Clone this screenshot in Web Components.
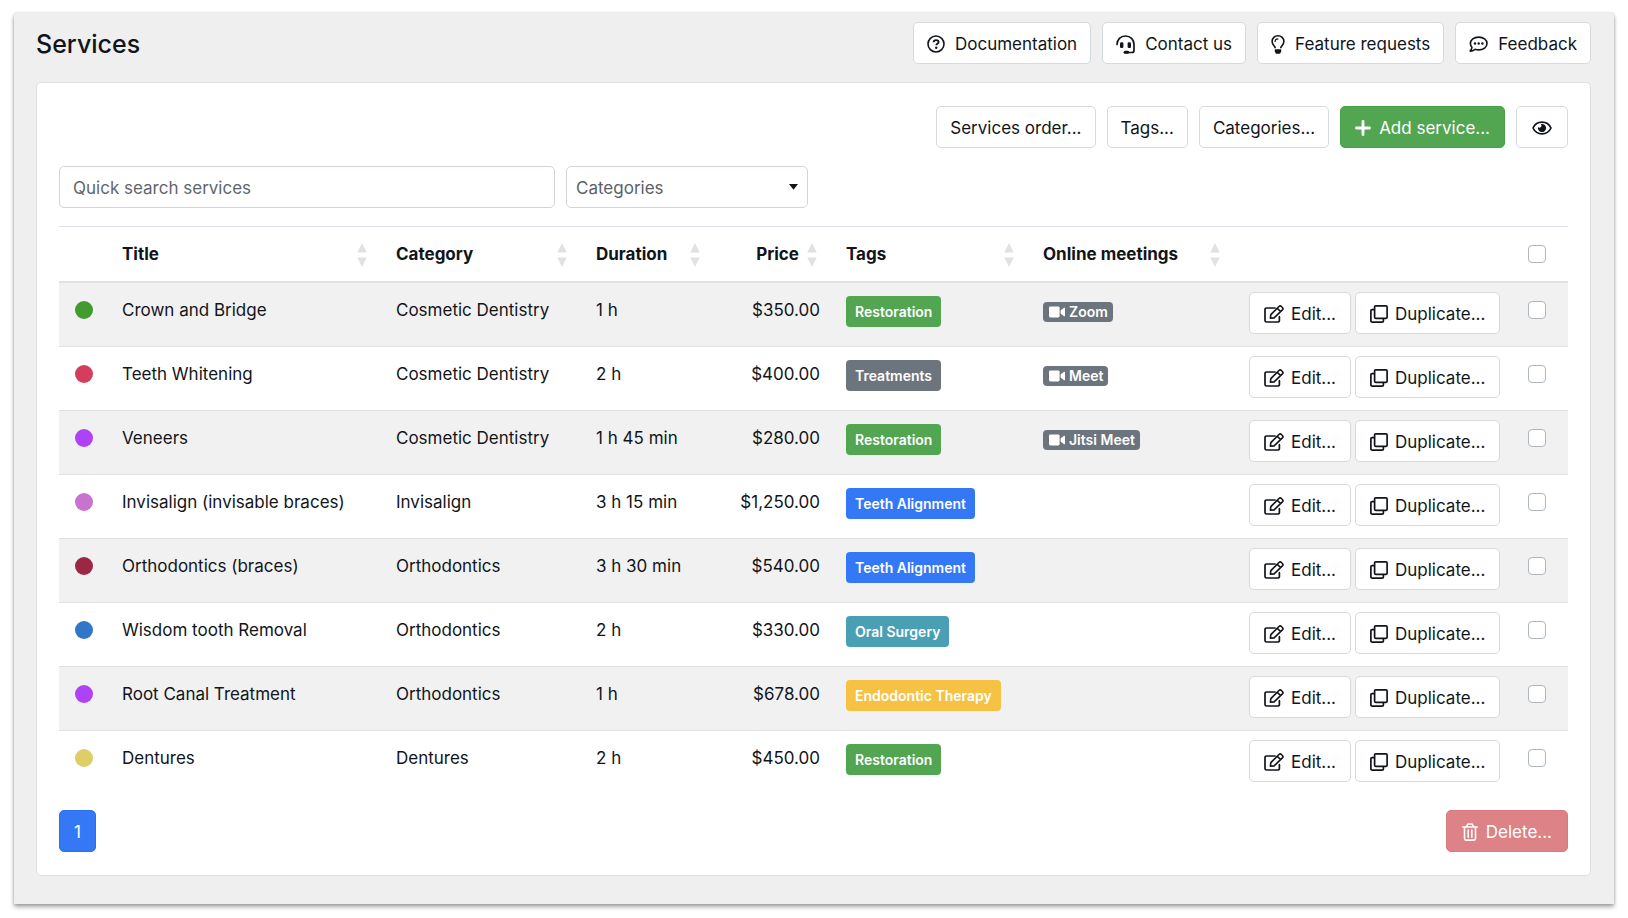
<!DOCTYPE html>
<html lang="en">
<head>
<meta charset="utf-8">
<title>Services</title>
<style>
  body { margin: 0; background: #fff; color: #11151a; font: 17px/27px Inter, "Liberation Sans", sans-serif; }
</style>
</head>
<body>
<services-page></services-page>

<script>
const ICONS = {
  help: [18, 18, '<circle cx="9" cy="9" r="8" fill="none" stroke="currentColor" stroke-width="1.6"/><path d="M6.6 7.200C6.700 5.800 7.800 5.100 9.100 5.100c1.400 0 2.500.8 2.500 2 0 1.600-2.300 1.700-2.300 3.100" fill="none" stroke="currentColor" stroke-width="1.900"/><circle cx="9.200" cy="12.700" r="1.200"/>'],
  headset: [19, 19, '<path d="M1 9.500C1 4.500 4.600 1 9.500 1S18 4.500 18 9.500V15.500a2 2 0 0 1-2 2H9.500" fill="none" stroke="currentColor" stroke-width="1.700" stroke-linecap="round"/><rect x="4" y="7.200" width="3.400" height="5.800" rx="1.300"/><rect x="11.600" y="7.200" width="3.400" height="5.800" rx="1.300"/><rect x="7.600" y="15.800" width="5.600" height="3" rx="1.500"/>'],
  bulb: [14, 19, '<path d="M4.300 13.200C4.200 11.200 1.100 9.800 1.100 6.400a5.900 5.600 0 0 1 11.800 0c0 3.400-3.100 4.800-3.200 6.800" fill="none" stroke="currentColor" stroke-width="1.600" stroke-linejoin="round"/><path d="M4.100 6.500C4.200 5 5.300 3.900 6.900 3.900" fill="none" stroke="currentColor" stroke-width="1.200" stroke-linecap="round"/><path d="M3.800 14.300h6.400v2.400L8.900 18.700H5.100L3.800 16.700z"/>'],
  comment: [19, 17, '<path d="M9.700 1.100c4.700 0 8.300 2.800 8.300 6.400s-3.600 6.400-8.300 6.400c-1.300 0-2.500-.2-3.600-.6-1.400 1.100-3.100 1.800-5 1.800 1-1.100 1.700-2.300 1.900-3.600-1-1.100-1.600-2.500-1.600-4 0-3.600 3.600-6.400 8.300-6.400z" fill="none" stroke="currentColor" stroke-width="1.600" stroke-linejoin="round"/><circle cx="6" cy="7.500" r="1.200"/><circle cx="9.700" cy="7.500" r="1.200"/><circle cx="13.400" cy="7.500" r="1.200"/>'],
  plus: [16, 16, '<path d="M8 1.500v13M1.500 8h13" stroke="currentColor" stroke-width="2.900" stroke-linecap="round"/>'],
  eye: [20, 14, '<path d="M1 7C2.700 3.400 6 1.100 10 1.100S17.300 3.400 19 7c-1.700 3.600-5 5.900-9 5.900S2.700 10.600 1 7z" fill="none" stroke="currentColor" stroke-width="1.700" stroke-linejoin="round"/><path d="M10 2.900a4.100 4.100 0 1 1-4 3.200 2 2 0 0 0 2.900-2.900c.3-.2.700-.3 1.100-.3z"/>'],
  edit: [20, 18, '<path d="M11 3H2.600A1.600 1.600 0 0 0 1 4.600v10.800A1.600 1.600 0 0 0 2.600 17h11.200a1.600 1.600 0 0 0 1.600-1.600V11.500" fill="none" stroke="currentColor" stroke-width="1.700" stroke-linecap="round"/><path d="M6.400 13.100l.4-3.500L15 1.500a1.700 1.700 0 0 1 2.400 0l1 1a1.700 1.700 0 0 1 0 2.400l-8.300 8zM13.300 3.300l3.300 3.300" fill="none" stroke="currentColor" stroke-width="1.600" stroke-linejoin="round"/>'],
  clone: [18, 18, '<rect x="4.600" y=".9" width="12.500" height="12.500" rx="1.200" fill="none" stroke="currentColor" stroke-width="1.700"/><path d="M4.600 4.600H2.100A1.200 1.200 0 0 0 .9 5.800v10.100a1.200 1.200 0 0 0 1.200 1.200h10.100a1.200 1.200 0 0 0 1.200-1.200v-2.500" fill="none" stroke="currentColor" stroke-width="1.700"/>'],
  trash: [16, 18, '<path d="M0.800 4h14.400M2.500 4v11.600a1.500 1.500 0 0 0 1.500 1.500h8a1.500 1.500 0 0 0 1.500-1.500V4M4.500 3.800 5.800 1h4.400l1.300 2.800M6.200 7v7.200M9.800 7v7.200" fill="none" stroke="currentColor" stroke-width="1.600" stroke-linecap="round" stroke-linejoin="round"/>'],
  video: [16, 12, '<rect x="0" y=".5" width="10.600" height="11" rx="1.400"/><path d="M11.600 4.400 15 1.800a.6.6 0 0 1 1 .5v7.400a.6.6 0 0 1-1 .5l-3.400-2.600z"/>'],
  sort: [10, 24, '<path d="M5 0l4.700 9.500H.3zM5 24l4.700-9.500H.3z"/>'],
  caret: [9, 6, '<path d="M0 0h9L4.500 5.800z"/>']
};
const icon = (name) => {
  const [w, h, body] = ICONS[name];
  return `<svg width="${w}" height="${h}" viewBox="0 0 ${w} ${h}" fill="currentColor" aria-hidden="true">${body}</svg>`;
};

class UiIcon extends HTMLElement {
  constructor() {
    super();
    this.attachShadow({ mode: "open" }).innerHTML =
      `<style>:host{display:inline-flex;flex:none}svg{display:block}</style>${icon(this.getAttribute("name"))}`;
  }
}
customElements.define("ui-icon", UiIcon);

class UiButton extends HTMLElement {
  constructor() {
    super();
    const name = this.getAttribute("icon");
    const label = this.getAttribute("label");
    this.attachShadow({ mode: "open" }).innerHTML = `
      <style>
        :host { display: inline-flex; flex: none; --bg: #fff; --edge: #d5dade; --ink: inherit; }
        :host([kind="success"]) { --bg: #52a551; --edge: #46a046; --ink: #fff; --pad: 14px; --gap: 8px; }
        :host([kind="primary"]) { --bg: #3478f6; --edge: #2a6ff3; --ink: #fff; --pad: 14px; }
        :host([kind="danger"]) { --bg: #dd8286; --edge: #db7a7f; --ink: #fff; --pad: 15px; --gap: 8px; }
        :host([icon="eye"]) { --pad: 15px; }
        button { box-sizing: border-box; height: 42px; padding: 2px var(--pad, 13px) 0; display: inline-flex; align-items: center;
          gap: var(--gap, 9px); font: inherit; color: var(--ink); background: var(--bg);
          border: 1px solid var(--edge); border-radius: 5px; white-space: nowrap; cursor: pointer; }
      </style>
      <button type="button"${label ? ` aria-label="${label}"` : ""}${this.hasAttribute("disabled") ? " disabled" : ""}>${name ? `<ui-icon name="${name}"></ui-icon>` : ""}${label ? "" : "<slot></slot>"}</button>`;
  }
}
customElements.define("ui-button", UiButton);

class TagBadge extends HTMLElement {
  constructor() {
    super();
    this.attachShadow({ mode: "open" }).innerHTML = `
      <style>
        :host { display: inline-block; box-sizing: border-box; height: 31px; padding: 0 9px; border-radius: 4px;
          font-size: 14px; font-weight: 600; line-height: 31px; color: #fff; background: #6c757d; white-space: nowrap; }
        :host([tone="green"]) { background: #52a551; }
        :host([tone="blue"]) { background: #3478f6; }
        :host([tone="teal"]) { background: #4a9fb5; }
        :host([tone="amber"]) { background: #f6c244; }
      </style><slot></slot>`;
  }
}
customElements.define("tag-badge", TagBadge);

class MeetingBadge extends HTMLElement {
  constructor() {
    super();
    this.attachShadow({ mode: "open" }).innerHTML = `
      <style>
        :host { display: inline-flex; align-items: center; gap: 4px; box-sizing: border-box; height: 20px;
          padding: 0 5px 0 6px; border-radius: 4px; font-size: 14px; font-weight: 600; line-height: 20px;
          color: #fff; background: #6c757d; white-space: nowrap; }
      </style><ui-icon name="video"></ui-icon><slot></slot>`;
  }
}
customElements.define("meeting-badge", MeetingBadge);

const SERVICES = [
  ["#429b2e", "Crown and Bridge", "Cosmetic Dentistry", "1 h", "$350.00", "green", "Restoration", "Zoom"],
  ["#d43d5c", "Teeth Whitening", "Cosmetic Dentistry", "2 h", "$400.00", "gray", "Treatments", "Meet"],
  ["#ae42f5", "Veneers", "Cosmetic Dentistry", "1 h 45 min", "$280.00", "green", "Restoration", "Jitsi Meet"],
  ["#c973d0", "Invisalign (invisable braces)", "Invisalign", "3 h 15 min", "$1,250.00", "blue", "Teeth Alignment", ""],
  ["#9c2745", "Orthodontics (braces)", "Orthodontics", "3 h 30 min", "$540.00", "blue", "Teeth Alignment", ""],
  ["#3077c8", "Wisdom tooth Removal", "Orthodontics", "2 h", "$330.00", "teal", "Oral Surgery", ""],
  ["#ae42f5", "Root Canal Treatment", "Orthodontics", "1 h", "$678.00", "amber", "Endodontic Therapy", ""],
  ["#dfcd68", "Dentures", "Dentures", "2 h", "$450.00", "green", "Restoration", ""]
];

class ServicesTable extends HTMLElement {
  constructor() {
    super();
    const head = (text, cls = "") =>
      `<th scope="col" class="${cls}"><span class="head">${text}<ui-icon name="sort"></ui-icon></span></th>`;
    const rows = SERVICES.map(([color, title, category, duration, price, tone, tag, meeting]) => `
      <tr>
        <td class="mark"><span class="dot" style="background:${color}"></span></td>
        <td>${title}</td><td>${category}</td><td>${duration}</td><td class="price">${price}</td>
        <td class="tag"><tag-badge tone="${tone}">${tag}</tag-badge></td>
        <td class="meet">${meeting ? `<meeting-badge>${meeting}</meeting-badge>` : ""}</td>
        <td class="actions"><div><ui-button icon="edit">Edit...</ui-button><ui-button icon="clone">Duplicate...</ui-button></div></td>
        <td class="pick"><input type="checkbox" aria-label="Select ${title}"></td>
      </tr>`).join("");
    this.attachShadow({ mode: "open" }).innerHTML = `
      <style>
        :host { display: block; }
        table { width: 100%; border-collapse: separate; border-spacing: 0; table-layout: fixed; }
        th, td { box-sizing: border-box; padding: 14px 13px 0; text-align: left; vertical-align: top; white-space: nowrap; }
        th { height: 57px; padding: 1px 16px 0 13px; vertical-align: middle; font-weight: 700;
          border-top: 1px solid #dee2e6; border-bottom: 2px solid #dee2e6; }
        td { height: 64px; border-bottom: 1px solid #dee2e6; }
        tbody tr:nth-child(odd) td { background: #f1f1f1; }
        tbody tr:last-child td { height: 63px; border-bottom: 0; background: none; }
        .head { display: flex; align-items: center; justify-content: space-between; }
        .head ui-icon { color: #dfe1e2; }
        th.price .head { justify-content: flex-end; gap: 8px; }
        td.price { text-align: right; }
        td.mark { padding: 18px 0 0 16px; }
        .dot { display: block; width: 18px; height: 18px; border-radius: 50%; }
        td.tag { line-height: 0; padding-top: 13px; }
        td.meet { line-height: 0; padding-top: 19px; }
        td.actions { padding-top: 9px; }
        .actions div { display: flex; gap: 4px; --gap: 7px; --pad: 14px; }
        th.pick { padding: 0 0 0 14px; }
        td.pick { padding: 18px 0 0 14px; }
        input { appearance: none; display: block; box-sizing: border-box; width: 18px; height: 18px; margin: 0;
          background: #fff; border: 1px solid #adb5bd; border-radius: 4px; }
        input:checked { background: #3478f6; }
      </style>
      <table>
        <colgroup><col style="width:50px"><col><col style="width:200px"><col style="width:133px"><col style="width:117px"><col style="width:197px"><col style="width:206px"><col style="width:278px"><col style="width:54px"></colgroup>
        <thead><tr>
          <th></th>${head("Title")}${head("Category")}${head("Duration")}${head("Price", "price")}${head("Tags")}${head("Online meetings")}<th></th>
          <th class="pick"><input type="checkbox" aria-label="Select all services"></th>
        </tr></thead>
        <tbody>${rows}</tbody>
      </table>`;
  }
}
customElements.define("services-table", ServicesTable);

class ServiceFilters extends HTMLElement {
  constructor() {
    super();
    this.attachShadow({ mode: "open" }).innerHTML = `
      <style>
        :host { display: grid; grid-template-columns: 496px 242px; gap: 11px; }
        input, select { appearance: none; box-sizing: border-box; width: 100%; height: 42px; margin: 0; font: inherit;
          background: #fff; border: 1px solid #d0d6dc; border-radius: 5px; }
        input { padding: 2px 13px 0; color: inherit; }
        input::placeholder { color: #5f666d; opacity: 1; }
        select { padding: 2px 9px 0; color: #5c6166; }
        .select { display: grid; align-items: center; }
        .select > * { grid-area: 1 / 1; }
        .select ui-icon { justify-self: end; margin-right: 10px; pointer-events: none; }
      </style>
      <input type="search" placeholder="Quick search services" aria-label="Quick search services">
      <div class="select">
        <select aria-label="Categories"><option>Categories</option></select>
        <ui-icon name="caret"></ui-icon>
      </div>`;
  }
}
customElements.define("service-filters", ServiceFilters);

class SurfaceCard extends HTMLElement {
  constructor() {
    super();
    this.attachShadow({ mode: "open" }).innerHTML = `
      <style>:host { display: block; padding: 23px 22px; background: #fff; border: 1px solid #dddfe0; border-radius: 5px; }</style><slot></slot>`;
  }
}
customElements.define("surface-card", SurfaceCard);

class ServicesPage extends HTMLElement {
  constructor() {
    super();
    this.attachShadow({ mode: "open" }).innerHTML = `
      <style>
        :host { display: block; margin: 13px 14px 14px; padding: 9px 23px 28px 22px; background: #efefef; border-radius: 3px 3px 0 0;
          box-shadow: 0 3px 4px rgba(0,0,0,.34), 0 0 3px rgba(0,0,0,.18); }
        header { display: flex; align-items: center; justify-content: space-between; margin-bottom: 18px; }
        h1 { margin: 0; padding-top: 2px; font-size: 25px; line-height: 40px; font-weight: 500; }
        nav, .tools { display: flex; gap: 11px; }
        nav { --gap: 10px; }
        .tools { justify-content: flex-end; }
        service-filters { margin: 18px 0; }
        footer { display: flex; justify-content: space-between; margin-top: 16px; }
      </style>
      <header>
        <h1>Services</h1>
        <nav aria-label="Help">
          <ui-button icon="help">Documentation</ui-button>
          <ui-button icon="headset">Contact us</ui-button>
          <ui-button icon="bulb">Feature requests</ui-button>
          <ui-button icon="comment">Feedback</ui-button>
        </nav>
      </header>
      <surface-card>
        <div class="tools">
          <ui-button>Services order...</ui-button>
          <ui-button>Tags...</ui-button>
          <ui-button>Categories...</ui-button>
          <ui-button kind="success" icon="plus">Add service...</ui-button>
          <ui-button icon="eye" label="Visible columns"></ui-button>
        </div>
        <service-filters></service-filters>
        <services-table></services-table>
        <footer>
          <ui-button kind="primary">1</ui-button>
          <ui-button kind="danger" icon="trash" disabled>Delete...</ui-button>
        </footer>
      </surface-card>`;
  }
}
customElements.define("services-page", ServicesPage);
</script>
</body>
</html>
